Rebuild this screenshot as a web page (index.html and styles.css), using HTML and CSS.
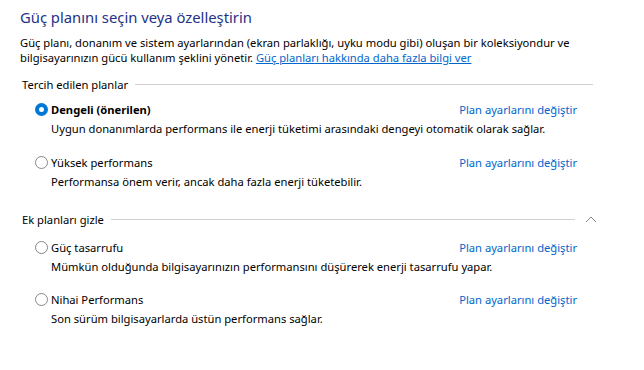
FILE: index.html
```html
<!DOCTYPE html>
<html lang="tr">
<head>
  <meta charset="UTF-8" />
  <title>Güç Seçenekleri</title>
  <link rel="stylesheet" href="styles.css">
</head>
<body>
  <div class="page">
    <h1>Güç planını seçin veya özelleştirin</h1>
    <p class="intro">Güç planı, donanım ve sistem ayarlarından (ekran parlaklığı, uyku modu gibi) oluşan bir koleksiyondur ve bilgisayarınızın gücü kullanım şeklini yönetir. <a href="#">Güç planları hakkında daha fazla bilgi ver</a></p>

    <div class="group-head">
      <span>Tercih edilen planlar</span>
      <span class="rule"></span>
    </div>

    <div class="plan">
      <div class="plan-row">
        <span class="radio checked"></span>
        <span class="plan-name bold">Dengeli (önerilen)</span>
        <a class="plan-link" href="#">Plan ayarlarını değiştir</a>
      </div>
      <div class="plan-desc">Uygun donanımlarda performans ile enerji tüketimi arasındaki dengeyi otomatik olarak sağlar.</div>
    </div>

    <div class="plan">
      <div class="plan-row">
        <span class="radio"></span>
        <span class="plan-name">Yüksek performans</span>
        <a class="plan-link" href="#">Plan ayarlarını değiştir</a>
      </div>
      <div class="plan-desc">Performansa önem verir, ancak daha fazla enerji tüketebilir.</div>
    </div>

    <div class="group-head second">
      <span>Ek planları gizle</span>
      <span class="rule"></span>
      <svg class="chevron" width="12" height="8" viewBox="0 0 12 8"><path d="M1 7 L6 2 L11 7" fill="none" stroke="#888" stroke-width="1"/></svg>
    </div>

    <div class="plan first">
      <div class="plan-row">
        <span class="radio"></span>
        <span class="plan-name">Güç tasarrufu</span>
        <a class="plan-link" href="#">Plan ayarlarını değiştir</a>
      </div>
      <div class="plan-desc">Mümkün olduğunda bilgisayarınızın performansını düşürerek enerji tasarrufu yapar.</div>
    </div>

    <div class="plan">
      <div class="plan-row">
        <span class="radio"></span>
        <span class="plan-name">Nihai Performans</span>
        <a class="plan-link" href="#">Plan ayarlarını değiştir</a>
      </div>
      <div class="plan-desc">Son sürüm bilgisayarlarda üstün performans sağlar.</div>
    </div>
  </div>
</body>
</html>
```

FILE: styles.css
```css
:root {
  --title: #1e3287;
  --link: #0066cc;
  --rule: #d0d0d0;
}
body {
  margin: 0;
  background: #fff;
  color: #000;
  font-family: "Noto Sans", "Open Sans", sans-serif;
  font-size: 11.2px;
  line-height: 15px;
}
.page {
  width: 573px;
  padding: 7px 0 0 20px;
}
h1 {
  margin: 0;
  font-size: 14.8px;
  line-height: 20px;
  font-weight: normal;
  color: var(--title);
}
.intro { margin: 8px 0 0; }
.intro a { color: var(--link); }

.group-head {
  display: flex;
  align-items: center;
  gap: 7px;
  margin: 12px 0 0 2px;
}
.group-head .rule {
  flex: 1;
  border-top: 1px solid var(--rule);
}
.group-head.second { margin-top: 23px; width: 575px; }
.chevron { margin-left: 3px; }

.plan { margin: 10px 16px 18.5px 15px; }
.plan.first { margin-top: 13px; }
.plan-row {
  display: flex;
  align-items: center;
  gap: 3px;
}
.plan-name.bold { font-weight: bold; }
.plan-link {
  margin-left: auto;
  color: var(--link);
  text-decoration: none;
}
.plan-desc { margin: 4px 0 0 16px; }

.radio {
  width: 11px;
  height: 11px;
  border: 1px solid #888;
  border-radius: 50%;
  background: #fff;
}
.radio.checked {
  width: 5px;
  height: 5px;
  border: 4px solid #0078d7;
}
```
